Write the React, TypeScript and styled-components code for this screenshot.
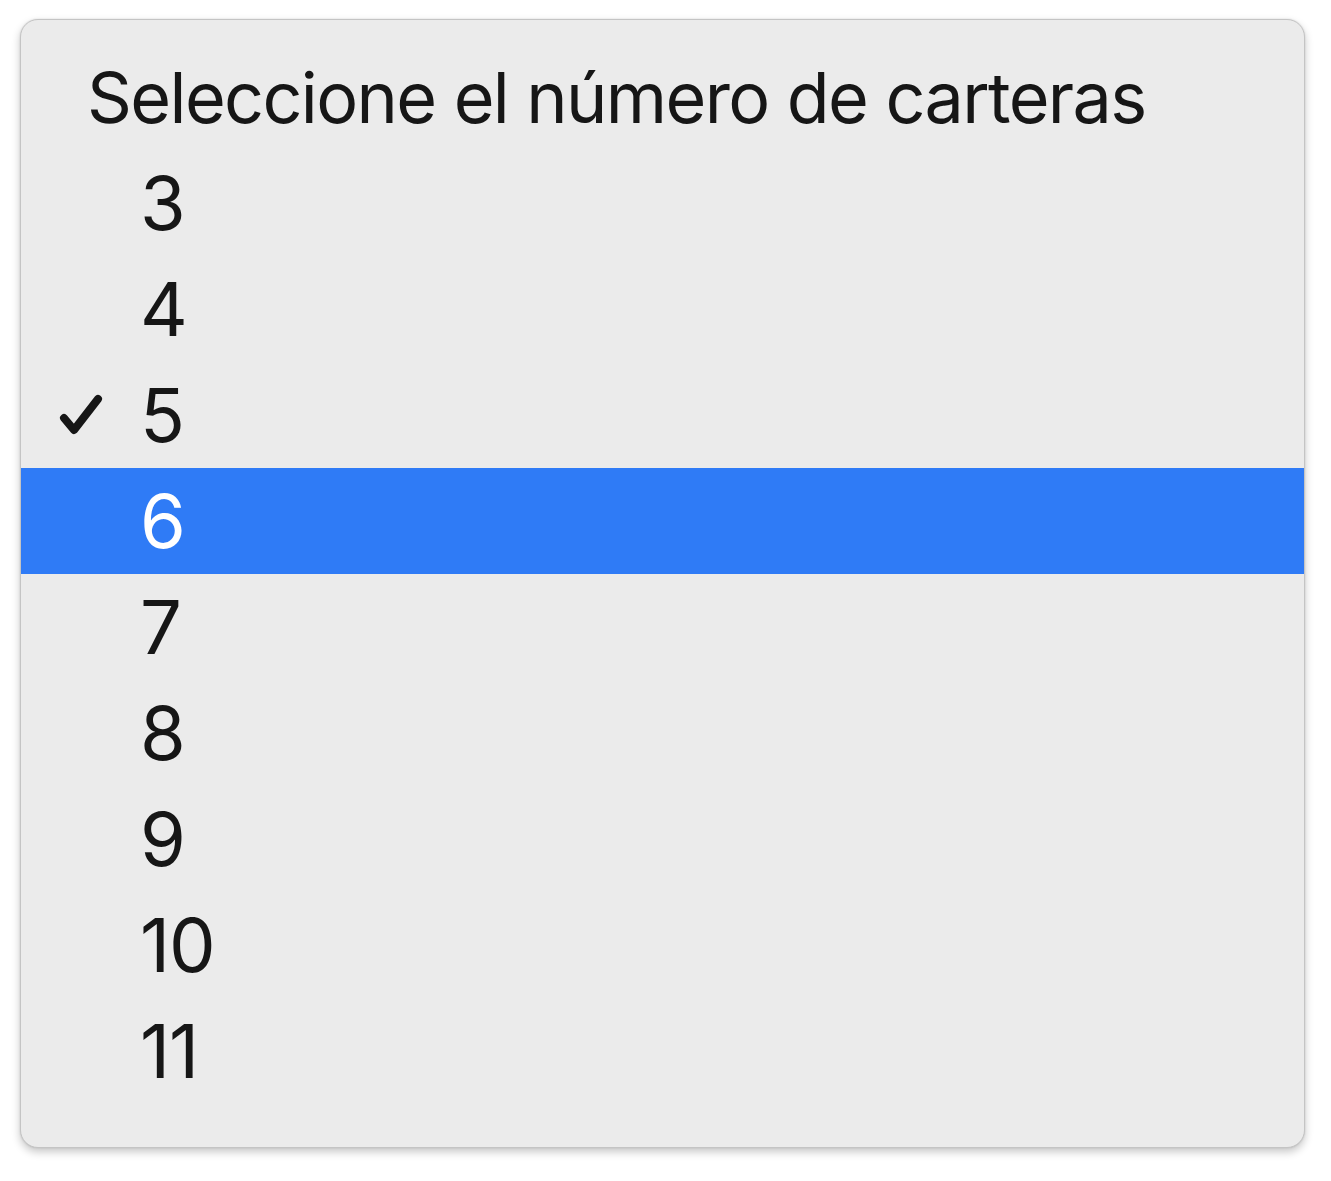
import React from "react";
import styled, { createGlobalStyle } from "styled-components";

const Global = createGlobalStyle`
  html, body { margin: 0; padding: 0; background: #ffffff; }
  body { font-family: Inter, "Helvetica Neue", Arial, sans-serif; }
`;

const Page = styled.div`
  padding: 19px 26px 30px 20px;
`;

const Menu = styled.div`
  width: 1285px;
  height: 1129px;
  box-sizing: border-box;
  background: #ebebeb;
  border: 1px solid #c4c4c4;
  border-radius: 18px;
  box-shadow: 0 4px 8px rgba(0, 0, 0, 0.22), 0 0 2px rgba(0, 0, 0, 0.12);
  overflow: hidden;
  display: flex;
  flex-direction: column;
`;

const Title = styled.div`
  height: 130px;
  display: flex;
  align-items: center;
  padding-left: 66px;
  padding-top: 24px;
  box-sizing: border-box;
  font-size: 70px;
  letter-spacing: -1.6px;
  color: #161616;
`;

const Row = styled.div<{ $active?: boolean }>`
  height: 106px;
  display: flex;
  align-items: center;
  background: ${(p) => (p.$active ? "#2f7bf6" : "transparent")};
  color: ${(p) => (p.$active ? "#ffffff" : "#161616")};
  font-size: 74px;
  letter-spacing: -1px;
`;

const Mark = styled.span`
  width: 119px;
  display: flex;
  justify-content: flex-end;
  padding-right: 37px;
  box-sizing: border-box;
`;

const Check = () => (
  <svg width="44" height="42" viewBox="0 0 44 42">
    <path
      d="M5 24 L15 36 L39 5"
      fill="none"
      stroke="#161616"
      strokeWidth="8"
      strokeLinecap="round"
      strokeLinejoin="round"
    />
  </svg>
);

const options = [3, 4, 5, 6, 7, 8, 9, 10, 11];

export default function App() {
  return (
    <>
      <Global />
      <Page>
        <Menu>
          <Title>Seleccione el número de carteras</Title>
          {options.map((n) => (
            <Row key={n} $active={n === 6}>
              <Mark>{n === 5 ? <Check /> : null}</Mark>
              {n}
            </Row>
          ))}
        </Menu>
      </Page>
    </>
  );
}
